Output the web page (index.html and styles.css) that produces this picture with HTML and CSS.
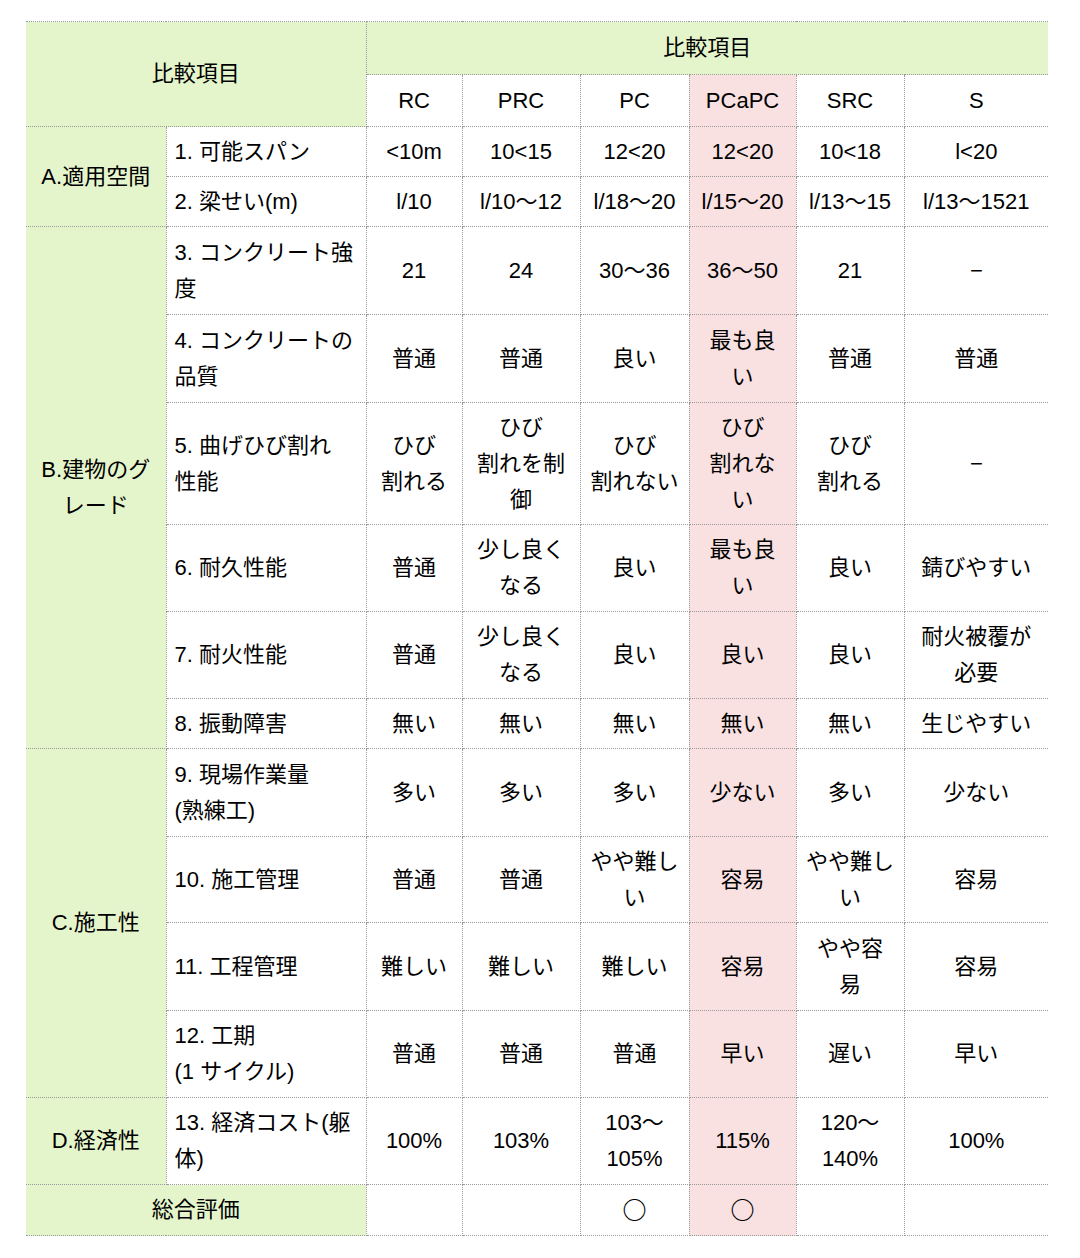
FILE: index.html
```html
<!DOCTYPE html>
<html lang="ja">
<head>
<meta charset="utf-8">
<title>比較項目</title>
<link rel="stylesheet" href="styles.css">
</head>
<body>
<table class="cmp">
  <colgroup>
    <col class="c-cat">
    <col class="c-item">
    <col class="c-rc">
    <col class="c-prc">
    <col class="c-pc">
    <col class="c-pcapc">
    <col class="c-src">
    <col class="c-s">
  </colgroup>
  <tr class="r53">
    <td class="g" rowspan="2" colspan="2">比較項目</td>
    <td class="g" colspan="6">比較項目</td>
  </tr>
  <tr class="r52">
    <td>RC</td><td>PRC</td><td>PC</td><td class="p">PCaPC</td><td>SRC</td><td>S</td>
  </tr>
  <tr class="r50">
    <td class="g" rowspan="2">A.適用空間</td>
    <td class="item">1. 可能スパン</td>
    <td>&lt;10m</td><td>10&lt;15</td><td>12&lt;20</td><td class="p">12&lt;20</td><td>10&lt;18</td><td>l&lt;20</td>
  </tr>
  <tr class="r50">
    <td class="item">2. 梁せい(m)</td>
    <td>l/10</td><td>l/10～12</td><td>l/18～20</td><td class="p">l/15～20</td><td>l/13～15</td><td>l/13～1521</td>
  </tr>
  <tr class="r88">
    <td class="g" rowspan="6">B.建物のグ<br>レード</td>
    <td class="item">3. コンクリート強<br>度</td>
    <td>21</td><td>24</td><td>30～36</td><td class="p">36～50</td><td>21</td><td>−</td>
  </tr>
  <tr class="r88">
    <td class="item">4. コンクリートの<br>品質</td>
    <td>普通</td><td>普通</td><td>良い</td><td class="p">最も良<br>い</td><td>普通</td><td>普通</td>
  </tr>
  <tr class="r122">
    <td class="item">5. 曲げひび割れ<br>性能</td>
    <td>ひび<br>割れる</td><td>ひび<br>割れを制<br>御</td><td>ひび<br>割れない</td><td class="p">ひび<br>割れな<br>い</td><td>ひび<br>割れる</td><td>−</td>
  </tr>
  <tr class="r87">
    <td class="item">6. 耐久性能</td>
    <td>普通</td><td>少し良く<br>なる</td><td>良い</td><td class="p">最も良<br>い</td><td>良い</td><td>錆びやすい</td>
  </tr>
  <tr class="r87">
    <td class="item">7. 耐火性能</td>
    <td>普通</td><td>少し良く<br>なる</td><td>良い</td><td class="p">良い</td><td>良い</td><td>耐火被覆が<br>必要</td>
  </tr>
  <tr class="r50">
    <td class="item">8. 振動障害</td>
    <td>無い</td><td>無い</td><td>無い</td><td class="p">無い</td><td>無い</td><td>生じやすい</td>
  </tr>
  <tr class="r88">
    <td class="g" rowspan="4">C.施工性</td>
    <td class="item">9. 現場作業量<br>(熟練工)</td>
    <td>多い</td><td>多い</td><td>多い</td><td class="p">少ない</td><td>多い</td><td>少ない</td>
  </tr>
  <tr class="r86">
    <td class="item">10. 施工管理</td>
    <td>普通</td><td>普通</td><td>やや難し<br>い</td><td class="p">容易</td><td>やや難し<br>い</td><td>容易</td>
  </tr>
  <tr class="r88">
    <td class="item">11. 工程管理</td>
    <td>難しい</td><td>難しい</td><td>難しい</td><td class="p">容易</td><td>やや容<br>易</td><td>容易</td>
  </tr>
  <tr class="r87">
    <td class="item">12. 工期<br>(1 サイクル)</td>
    <td>普通</td><td>普通</td><td>普通</td><td class="p">早い</td><td>遅い</td><td>早い</td>
  </tr>
  <tr class="r87">
    <td class="g">D.経済性</td>
    <td class="item">13. 経済コスト(躯<br>体)</td>
    <td>100%</td><td>103%</td><td>103～<br>105%</td><td class="p">115%</td><td>120～<br>140%</td><td>100%</td>
  </tr>
  <tr class="r51">
    <td class="g" colspan="2">総合評価</td>
    <td></td><td></td><td><span class="mark">○</span></td><td class="p"><span class="mark">○</span></td><td></td><td></td>
  </tr>
</table>
</body>
</html>
```

FILE: styles.css
```css
html, body {
  margin: 0;
  padding: 0;
  background: #ffffff;
}

body {
  font-family: "Liberation Sans", "Noto Sans CJK JP", sans-serif;
  font-size: 22px;
  color: #000000;
}

.cmp {
  margin: 21px 0 0 26px;
  width: 1022px;
  table-layout: fixed;
  border-collapse: collapse;
  border-left: hidden;
  border-right: hidden;
}

.c-cat { width: 140px; }
.c-item { width: 200px; }
.c-rc { width: 96px; }
.c-prc { width: 118px; }
.c-pc { width: 109px; }
.c-pcapc { width: 107px; }
.c-src { width: 108px; }
.c-s { width: 144px; }

.cmp td {
  border: 1px dotted #9a9a9a;
  padding: 0 2px;
  line-height: 36px;
  text-align: center;
  vertical-align: middle;
  white-space: nowrap;
}

.cmp td.item {
  text-align: left;
  padding: 0 0 0 8px;
}

.cmp td.g {
  background: #e5f5cb;
}

.cmp td.p {
  background: #f9e1e2;
}

.mark {
  font-family: "Noto Sans CJK JP", sans-serif;
  font-size: 24px;
  font-weight: bold;
}

.r50 td { height: 49px; }
.r51 td { height: 50px; }
.r52 td { height: 51px; }
.r53 td { height: 52px; }
.r86 td { height: 85px; }
.r87 td { height: 86px; }
.r88 td { height: 87px; }
.r122 td { height: 121px; }
```
